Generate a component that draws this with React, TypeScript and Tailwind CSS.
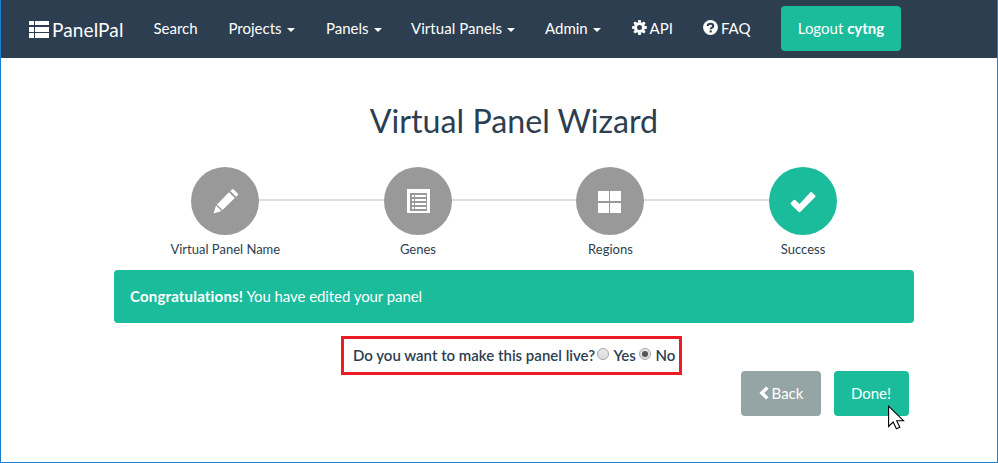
import React from "react";

const GREEN_BUTTON =
  "flex h-[45px] items-center justify-center rounded bg-[#1abc9c] text-white whitespace-nowrap";

function BrandIcon() {
  return (
    <svg width="20" height="17" viewBox="0 0 20 17" fill="#fff" shapeRendering="crispEdges">
      <path d="M0 0h5v4H0zM6 0h14v4H6zM0 6h5v5H0zM6 6h14v5H6zM0 12h5v5H0zM6 12h14v5H6z" />
    </svg>
  );
}

function GearIcon() {
  return (
    <svg className="mb-[2px]" width="15" height="15" viewBox="-7.5 -7.5 15 15" fill="#fff">
      <path
        fillRule="evenodd"
        d="M0-5.3A5.3 5.3 0 1 0 0 5.3A5.3 5.3 0 1 0 0-5.3ZM0-2.5A2.5 2.5 0 1 1 0 2.5A2.5 2.5 0 1 1 0-2.5Z"
      />
      {[0, 45, 90, 135, 180, 225, 270, 315].map((angle) => (
        <path key={angle} transform={`rotate(${angle})`} d="M-1.8-4.7L-1.2-7.4H1.2L1.8-4.7Z" />
      ))}
    </svg>
  );
}

function HelpIcon() {
  return (
    <svg className="mb-[2px]" width="15" height="15" viewBox="0 0 15 15">
      <circle cx="7.5" cy="7.5" r="7.4" fill="#fff" />
      <path d="M4.8 6.1Q4.8 3.7 7.5 3.7T10.2 5.9Q10.2 7.1 8.9 7.7Q7.7 8.2 7.7 9.3" fill="none" stroke="#2c3e50" strokeWidth="2.1" />
      <path d="M6.6 10.4h2.2v2h-2.2z" fill="#2c3e50" />
    </svg>
  );
}

function PencilIcon() {
  return (
    <svg className="mb-px ml-px" width="26" height="26" viewBox="0 0 26 26" fill="#fff">
      <path d="M18.7 1.7Q19.8.5 21 1.7L24.5 5.2Q25.6 6.3 24.5 7.4L23.1 8.8L17.3 3.1Z" />
      <path d="M16 4.3L21.8 10L9.6 22L3.9 16.4Z" />
      <path d="M3 17.6L8.5 23L.6 25.4Z" />
    </svg>
  );
}

function ListIcon() {
  return (
    <svg className="ml-px" width="23" height="24" viewBox="0 0 23 24" shapeRendering="crispEdges">
      <path fill="#fff" fillRule="evenodd" d="M0 0h23v24H0zM3 4v18h17V4z" />
      <path
        fill="#fff"
        d="M5 6h2v2H5zM8 6h11v2H8zM5 10h2v2H5zM8 10h11v2H8zM5 14h2v2H5zM8 14h11v2H8zM5 18h2v2H5zM8 18h11v2H8z"
      />
    </svg>
  );
}

function GridIcon() {
  return (
    <svg className="mt-[2px] mr-[2px]" width="23" height="22" viewBox="0 0 23 22" fill="#fff" shapeRendering="crispEdges">
      <path d="M0 0h11v10H0zM12 0h11v10H12zM0 12h11v10H0zM12 12h11v10H12z" />
    </svg>
  );
}

function CheckIcon() {
  return (
    <svg className="mt-px" width="26" height="22" viewBox="0 0 26 22" fill="#fff">
      <path d="M5.2 9L9.5 13.1L20.4 1.2Q21.1.5 21.8 1.2L25.2 4.6Q25.8 5.3 25.2 6L10.2 21Q9.4 21.7 8.7 21L.8 13.2Q.2 12.5.8 11.8L3.8 9Q4.5 8.4 5.2 9Z" />
    </svg>
  );
}

function Caret() {
  return <span className="ml-[5px] mt-[3px] h-0 w-0 border-x-4 border-t-4 border-x-transparent border-t-white" />;
}

function NavItem({ width, children }: { width: string; children: React.ReactNode }) {
  return <a className={`flex shrink-0 items-center whitespace-nowrap ${width}`}>{children}</a>;
}

function Step({ label, active, children }: { label: string; active?: boolean; children: React.ReactNode }) {
  return (
    <div className="flex w-[192.6px] flex-col items-center">
      <div
        className={`z-10 flex h-[68px] w-[68px] items-center justify-center rounded-full ${
          active ? "bg-[#1abc9c]" : "bg-[#999999]"
        }`}
      >
        {children}
      </div>
      <div className="mt-[5px] text-[13px] leading-[18px] whitespace-nowrap">{label}</div>
    </div>
  );
}

function Radio({ checked }: { checked?: boolean }) {
  return (
    <span
      role="radio"
      aria-checked={!!checked}
      className="mb-[3px] flex h-3 w-3 items-center justify-center rounded-full border border-[#a6a6a6] bg-linear-to-b from-[#e9e9e9] to-[#dcdcdc]"
    >
      {checked && <span className="h-1.5 w-1.5 rounded-full bg-[#555]" />}
    </span>
  );
}

export default function App() {
  return (
    <div className="h-[463px] w-[998px] overflow-hidden border-x border-b border-[#1b80d0] bg-white font-[Lato,sans-serif] text-[15px] leading-[21px] text-[#2c3e50]">
      <nav className="flex h-[58px] items-center bg-[#2c3e50] pb-[2px] pl-[28px] text-white">
        <div className="flex w-[124.5px] shrink-0 items-center gap-[3px] pt-[2px] text-[19px]">
          <BrandIcon />
          <span className="tracking-[0.12px]">PanelPal</span>
        </div>
        <NavItem width="w-[75px]">Search</NavItem>
        <NavItem width="w-[97.5px]">Projects<Caret /></NavItem>
        <NavItem width="w-[85px]">Panels<Caret /></NavItem>
        <NavItem width="w-[134px]"><span className="tracking-[0.05px]">Virtual Panels</span><Caret /></NavItem>
        <NavItem width="w-[86.5px]">Admin<Caret /></NavItem>
        <NavItem width="w-[71.5px]"><GearIcon /><span className="ml-[3px]">API</span></NavItem>
        <NavItem width="w-[78px]"><HelpIcon /><span className="ml-[3px]">FAQ</span></NavItem>
        <a className={`${GREEN_BUTTON} w-[120px]`}>
          Logout&nbsp;<strong className="font-bold">cytng</strong>
        </a>
      </nav>

      <main>
        <h1 className="ml-[113px] mt-[43px] w-[800px] text-center text-[32.2px] leading-[40px]">Virtual Panel Wizard</h1>

        <div className="mt-[26px] ml-[128px] grid w-[770.4px] grid-cols-1">
          <div className="col-start-1 row-start-1 mx-[96px] mt-[32px] h-[2px] bg-[#dddddd]" />
          <div className="col-start-1 row-start-1 flex">
            <Step label="Virtual Panel Name"><PencilIcon /></Step>
            <Step label="Genes"><ListIcon /></Step>
            <Step label="Regions"><GridIcon /></Step>
            <Step label="Success" active><CheckIcon /></Step>
          </div>
        </div>

        <div className="mt-[12px] ml-[113px] flex h-[53px] w-[800px] items-center rounded bg-[#1abc9c] pl-4 text-white">
          <strong className="font-bold tracking-[0.18px]">Congratulations!</strong>
          <span className="tracking-[-0.07px]">&nbsp;You have edited your panel</span>
        </div>

        <div className="mt-[13px] ml-[340px] flex h-[39px] w-[341px] items-center border-3 border-[#ed1c24] pl-[9px] font-semibold whitespace-nowrap">
          <span className="w-[244px]">Do you want to make this panel live?</span>
          <Radio />
          <span className="ml-[4.5px] w-[25.5px]">Yes</span>
          <Radio checked />
          <span className="ml-[4.5px]">No</span>
        </div>

        <div className="relative -mt-1 ml-[740px] flex w-[168px] justify-between">
          <button className="flex h-[45px] w-[80px] items-center justify-center rounded bg-[#95a5a6] text-white">
            <svg className="mr-[3px] mb-px" width="10" height="14" viewBox="0 0 10 14" fill="#fff">
              <path d="M7.1.4L9.6 2.8L5.3 7L9.6 11.2L7.1 13.6L.4 7Z" />
            </svg>
            Back
          </button>
          <button className={`${GREEN_BUTTON} w-[75px] pr-px`}>Done!</button>
          <svg className="absolute top-[34px] left-[147px]" width="18" height="25" viewBox="0 0 18 25">
            <path d="M.6 1.2V21.4L5.2 17L8.4 23.8L11.8 22.3L8.7 15.7H15.5Z" fill="#fff" stroke="#000" strokeWidth="1.1" />
          </svg>
        </div>
      </main>
    </div>
  );
}
